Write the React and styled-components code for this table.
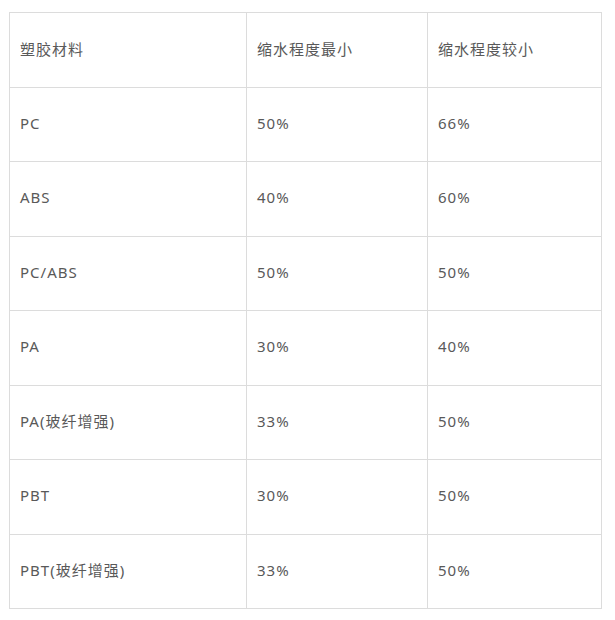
import styled, { createGlobalStyle } from 'styled-components'

const GlobalStyle = createGlobalStyle`
  body {
    margin: 0;
    background: #fff;
  }
`

const Page = styled.div`
  padding: 12px 0 0 9px;
`

const Table = styled.table`
  border-collapse: collapse;
  table-layout: fixed;
  width: 592px;
  font-family: 'Noto Sans', 'Noto Sans CJK SC', sans-serif;
  font-size: 15px;
  color: #595959;
  letter-spacing: 1px;
`

const Cell = styled.td`
  width: ${({ w }) => w}px;
  height: 74.5px;
  box-sizing: border-box;
  padding: 0 10px 3px;
  border: 1px solid #dcdcdc;
  vertical-align: middle;
  text-align: left;
  font-weight: 400;
`

const head = ['塑胶材料', '缩水程度最小', '缩水程度较小']
const rows = [
  ['PC', '50%', '66%'],
  ['ABS', '40%', '60%'],
  ['PC/ABS', '50%', '50%'],
  ['PA', '30%', '40%'],
  ['PA(玻纤增强)', '33%', '50%'],
  ['PBT', '30%', '50%'],
  ['PBT(玻纤增强)', '33%', '50%'],
]
const widths = [237, 181, 174]

function App() {
  return (
    <Page>
      <GlobalStyle />
      <Table>
        <tbody>
          <tr>
            {head.map((h, i) => (
              <Cell key={h} w={widths[i]}>{h}</Cell>
            ))}
          </tr>
          {rows.map((r) => (
            <tr key={r[0]}>
              {r.map((c, i) => (
                <Cell key={i} w={widths[i]}>{c}</Cell>
              ))}
            </tr>
          ))}
        </tbody>
      </Table>
    </Page>
  )
}

export default App
